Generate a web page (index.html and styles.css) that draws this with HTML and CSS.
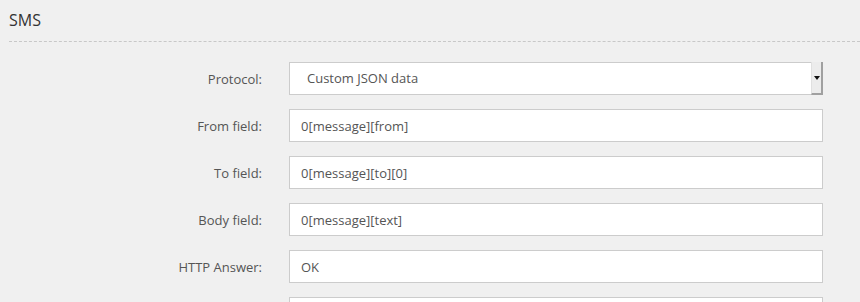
FILE: index.html
```html
<!DOCTYPE html>
<html lang="en">
<head>
    <meta charset="UTF-8">
    <title>SMS</title>
    <link rel="stylesheet" href="styles.css">
</head>
<body>
    <div class="section">
        <h3 class="section-title">SMS</h3>

        <div class="form-row">
            <label>Protocol:</label>
            <div class="select">
                <span class="select-text">Custom JSON data</span>
                <span class="select-btn"><span class="arrow"></span></span>
            </div>
        </div>
        <div class="form-row">
            <label>From field:</label>
            <input type="text" value="0[message][from]">
        </div>
        <div class="form-row">
            <label>To field:</label>
            <input type="text" value="0[message][to][0]">
        </div>
        <div class="form-row">
            <label>Body field:</label>
            <input type="text" value="0[message][text]">
        </div>
        <div class="form-row">
            <label>HTTP Answer:</label>
            <input type="text" value="OK">
        </div>
        <div class="form-row">
            <label></label>
            <input type="text" value="">
        </div>
    </div>
</body>
</html>
```

FILE: styles.css
```css
body {
    margin: 0;
    font-family: 'Open Sans', sans-serif;
    background-color: #f0f0f0;
    color: #555;
    overflow: hidden;
}

.section {
    padding: 0 0 0 9px;
}

.section-title {
    margin: 0;
    padding-top: 10px;
    padding-bottom: 11px;
    font-size: 16px;
    font-weight: normal;
    line-height: 20px;
    color: #333;
    border-bottom: 1px dashed #c8c8c8;
}

.section-title + .form-row {
    margin-top: 20px;
}

.form-row {
    display: flex;
    align-items: center;
    margin-bottom: 14px;
}

.form-row label {
    width: 253px;
    padding-right: 27px;
    text-align: right;
    font-size: 13px;
    color: #555;
}

.form-row input,
.select {
    box-sizing: border-box;
    width: 534px;
    height: 33px;
    background-color: #fff;
    border: 1px solid #ccc;
    font-family: 'Open Sans', sans-serif;
    font-size: 13px;
    color: #555;
}

.form-row input {
    padding: 0 11px;
    outline: none;
}

.select {
    display: flex;
    align-items: stretch;
}

.select-text {
    flex: 1;
    padding-left: 17px;
    line-height: 31px;
}

.select-btn {
    width: 9px;
    background-color: #ececec;
    border-left: 1px solid #e0e0e0;
    border-right: 2px solid #a0a0a0;
    border-bottom: 2px solid #a0a0a0;
    display: flex;
    align-items: center;
    justify-content: center;
    margin: -1px -1px -1px 0;
}

.arrow {
    width: 0;
    height: 0;
    border-left: 3px solid transparent;
    border-right: 3px solid transparent;
    border-top: 4px solid #111;
}
```
